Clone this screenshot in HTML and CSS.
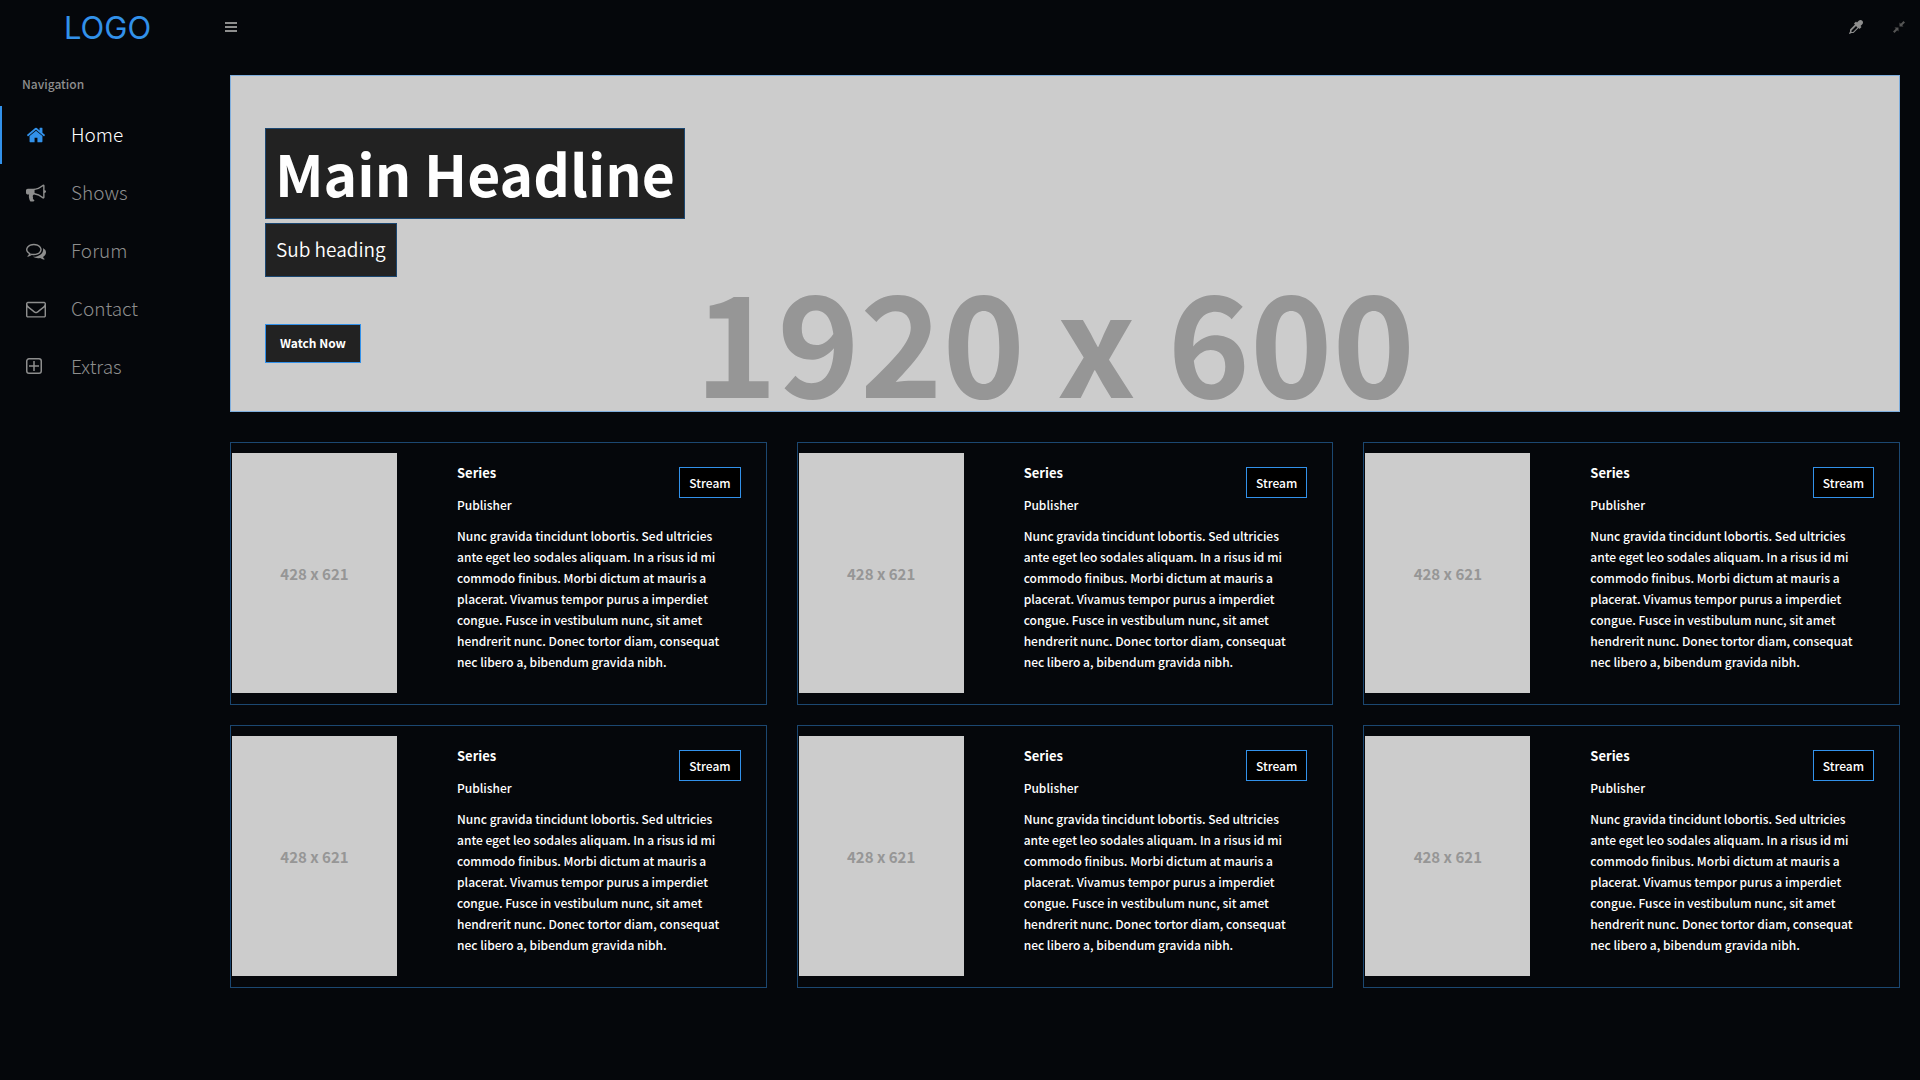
FILE: index.html
```html
<!DOCTYPE html>
<html lang="en">
<head>
<meta charset="utf-8">
<title>Home</title>
<meta name="viewport" content="width=device-width, initial-scale=1">
<link rel="stylesheet" href="styles.css">
</head>
<body>
<div class="app">
  <aside class="sidebar">
    <a class="logo" href="#">LOGO</a>
    <nav class="nav" aria-labelledby="nav-title">
      <h2 class="nav-title" id="nav-title">Navigation</h2>
      <a class="nav-link is-active" href="#">
        <svg class="nav-icon" viewBox="0 0 1792 1792" aria-hidden="true"><path d="M1472 992v480q0 26-19 45t-45 19h-384v-384h-256v384h-384q-26 0-45-19t-19-45v-480q0-1 .5-3t.5-3l575-474 575 474q1 2 1 6zm223-69l-62 74q-8 9-21 11h-3q-13 0-21-7l-692-577-692 577q-12 8-24 7-13-2-21-11l-62-74q-8-10-7-23.5t11-21.5l719-599q32-26 76-26t76 26l244 204v-195q0-14 9-23t23-9h192q14 0 23 9t9 23v408l219 182q10 8 11 21.5t-7 23.5z"/></svg>
        <span>Home</span>
      </a>
      <a class="nav-link" href="#">
        <svg class="nav-icon" viewBox="0 0 1792 1792" aria-hidden="true"><path d="M1664 640q53 0 90.5 37.5t37.5 90.5-37.5 90.5-90.5 37.5v384q0 52-38 90t-90 38q-417-347-812-380-58 19-91 66t-31 100.5 40 92.5q-20 33-23 65.5t6 58 33.5 55 48 50 61.5 50.5q-29 58-111.5 83t-168.5 11.5-132-55.5q-7-23-29.5-87.5t-32-94.5-23-89-15-101 3.5-98.5 22-110.5h-122q-66 0-113-47t-47-113v-192q0-66 47-113t113-47h480q435 0 896-384 52 0 90 38t38 90v384zm-128 604v-954q-394 302-768 343v270q377 42 768 341z"/></svg>
        <span>Shows</span>
      </a>
      <a class="nav-link" href="#">
        <svg class="nav-icon" viewBox="0 0 1792 1792" aria-hidden="true"><path d="M704 384q-153 0-286 52t-211.5 141-78.5 191q0 82 53 158t149 132l97 56-35 84q34-20 62-39l44-31 53 10q78 14 153 14 153 0 286-52t211.500-141 78.500-191-78.500-191-211.500-141-286-52zm0-128q191 0 353.500 68.500t256.500 186.500 94 257-94 257-256.500 186.500-353.500 68.500q-86 0-176-16-124 88-278 128-36 9-86 16h-3q-11 0-20.500-8t-11.500-21q-1-3-1-6.500t.5-6.500 2-6l2.500-5 3.500-5.500 4-5 4.500-5 4-4.500q5-6 23-25t26-29.500 22.500-29 25-38.500 20.500-44q-124-72-195-177t-71-224q0-139 94-257t256.500-186.500 353.500-68.500zm822 1169q10 24 20.500 44t25 38.500 22.500 29 26 29.500 23 25q1 1 4 4.500t4.500 5 4 5 3.500 5.500l2.500 5 2 6 .5 6.500-1 6.500q-3 14-13 22t-22 7q-50-7-86-16-154-40-278-128-90 16-176 16-271 0-472-132 58 4 88 4 161 0 309-45t264-129q125-92 192-212t67-254q0-77-23-152 129 71 204 178t75 230q0 120-71 224.500t-195 176.500z"/></svg>
        <span>Forum</span>
      </a>
      <a class="nav-link" href="#">
        <svg class="nav-icon" viewBox="0 0 1792 1792" aria-hidden="true"><path d="M1664 1504v-768q-32 36-69 66-268 206-426 338-51 43-83 67t-86.500 48.500-102.500 24.500h-2q-48 0-102.500-24.500t-86.500-48.500-83-67q-158-132-426-338-37-30-69-66v768q0 13 9.500 22.500t22.500 9.500h1472q13 0 22.500-9.500t9.500-22.500zm0-1051v-24.500l-.5-13-3-12.500-5.500-9-9-7.500-14-2.500h-1472q-13 0-22.500 9.500t-9.500 22.500q0 168 147 284 193 152 401 317 6 5 35 29.500t46 37.500 44.500 31.500 50.500 27.500 43 9h2q20 0 43-9t50.500-27.500 44.500-31.500 46-37.500 35-29.500q208-165 401-317 54-43 100.500-115.500t46.500-131.500zm128-37v1088q0 66-47 113t-113 47h-1472q-66 0-113-47t-47-113v-1088q0-66 47-113t113-47h1472q66 0 113 47t47 113z"/></svg>
        <span>Contact</span>
      </a>
      <a class="nav-link" href="#">
        <svg class="nav-icon" viewBox="0 0 20 20" aria-hidden="true"><path fill="none" stroke="currentColor" stroke-width="1.500" d="M3 1.750h10A2.250 2.250 0 0 1 15.250 4v10A2.250 2.250 0 0 1 13 16.250H3A2.250 2.250 0 0 1 .75 14V4A2.250 2.250 0 0 1 3 1.750zM8 4v10M3 9h10"/></svg>
        <span>Extras</span>
      </a>
    </nav>
  </aside>

  <div class="page">
    <header class="topbar">
      <button class="icon-button" type="button" aria-label="Toggle menu">
        <svg width="12" height="10" viewBox="0 0 12 10" aria-hidden="true"><path d="M0 0h12v2H0zM0 4h12v2H0zM0 8h12v2H0z"/></svg>
      </button>
      <div class="tools">
        <button class="icon-button" type="button" aria-label="Pick theme colour">
          <svg width="14" height="14" viewBox="0 0 1792 1792" aria-hidden="true"><path d="M1698 94q94 94 94 226.500t-94 225.500l-225 223 104 104q10 10 10 23t-10 23l-210 210q-10 10-23 10t-23-10l-105-105-603 603q-37 37-90 37h-203l-256 128-64-64 128-256v-203q0-53 37-90l603-603-105-105q-10-10-10-23t10-23l210-210q10-10 23-10t23 10l104 104 223-225q93-94 225.500-94t226.500 94zm-1186 1442l576-576-192-192-576 576v192h192z"/></svg>
        </button>
        <button class="icon-button is-dim" type="button" aria-label="Exit full screen">
          <svg width="12" height="12" viewBox="0 0 12 12" aria-hidden="true"><path d="M6.500 1.500 7.800 2.800 10.500 0 12 1.500 9.200 4.200 10.500 5.500h-4zM1.500 6.500h4v4L4.200 9.200 1.500 12 0 10.500 2.800 7.800z"/></svg>
        </button>
      </div>
    </header>

    <main class="content">
      <section class="hero">
        <div class="hero-image" aria-hidden="true">1920 x 600</div>
        <h1 class="hero-title">Main Headline</h1>
        <p class="hero-subtitle">Sub heading</p>
        <button class="hero-button" type="button">Watch Now</button>
      </section>

      <section class="cards">
        <article class="card">
          <div class="poster">428 x 621</div>
          <div class="card-body">
            <div class="card-head"><div><h3 class="card-title">Series</h3><p>Publisher</p></div><button class="stream" type="button">Stream</button></div>
            <p class="card-text">Nunc gravida tincidunt lobortis. Sed ultricies ante eget leo sodales aliquam. In a risus id mi commodo finibus. Morbi dictum at mauris a placerat. Vivamus tempor purus a imperdiet congue. Fusce in vestibulum nunc, sit amet hendrerit nunc. Donec tortor diam, consequat nec libero a, bibendum gravida nibh.</p>
          </div>
        </article>
        <article class="card">
          <div class="poster">428 x 621</div>
          <div class="card-body">
            <div class="card-head"><div><h3 class="card-title">Series</h3><p>Publisher</p></div><button class="stream" type="button">Stream</button></div>
            <p class="card-text">Nunc gravida tincidunt lobortis. Sed ultricies ante eget leo sodales aliquam. In a risus id mi commodo finibus. Morbi dictum at mauris a placerat. Vivamus tempor purus a imperdiet congue. Fusce in vestibulum nunc, sit amet hendrerit nunc. Donec tortor diam, consequat nec libero a, bibendum gravida nibh.</p>
          </div>
        </article>
        <article class="card">
          <div class="poster">428 x 621</div>
          <div class="card-body">
            <div class="card-head"><div><h3 class="card-title">Series</h3><p>Publisher</p></div><button class="stream" type="button">Stream</button></div>
            <p class="card-text">Nunc gravida tincidunt lobortis. Sed ultricies ante eget leo sodales aliquam. In a risus id mi commodo finibus. Morbi dictum at mauris a placerat. Vivamus tempor purus a imperdiet congue. Fusce in vestibulum nunc, sit amet hendrerit nunc. Donec tortor diam, consequat nec libero a, bibendum gravida nibh.</p>
          </div>
        </article>
        <article class="card">
          <div class="poster">428 x 621</div>
          <div class="card-body">
            <div class="card-head"><div><h3 class="card-title">Series</h3><p>Publisher</p></div><button class="stream" type="button">Stream</button></div>
            <p class="card-text">Nunc gravida tincidunt lobortis. Sed ultricies ante eget leo sodales aliquam. In a risus id mi commodo finibus. Morbi dictum at mauris a placerat. Vivamus tempor purus a imperdiet congue. Fusce in vestibulum nunc, sit amet hendrerit nunc. Donec tortor diam, consequat nec libero a, bibendum gravida nibh.</p>
          </div>
        </article>
        <article class="card">
          <div class="poster">428 x 621</div>
          <div class="card-body">
            <div class="card-head"><div><h3 class="card-title">Series</h3><p>Publisher</p></div><button class="stream" type="button">Stream</button></div>
            <p class="card-text">Nunc gravida tincidunt lobortis. Sed ultricies ante eget leo sodales aliquam. In a risus id mi commodo finibus. Morbi dictum at mauris a placerat. Vivamus tempor purus a imperdiet congue. Fusce in vestibulum nunc, sit amet hendrerit nunc. Donec tortor diam, consequat nec libero a, bibendum gravida nibh.</p>
          </div>
        </article>
        <article class="card">
          <div class="poster">428 x 621</div>
          <div class="card-body">
            <div class="card-head"><div><h3 class="card-title">Series</h3><p>Publisher</p></div><button class="stream" type="button">Stream</button></div>
            <p class="card-text">Nunc gravida tincidunt lobortis. Sed ultricies ante eget leo sodales aliquam. In a risus id mi commodo finibus. Morbi dictum at mauris a placerat. Vivamus tempor purus a imperdiet congue. Fusce in vestibulum nunc, sit amet hendrerit nunc. Donec tortor diam, consequat nec libero a, bibendum gravida nibh.</p>
          </div>
        </article>
      </section>
    </main>
  </div>
</div>
</body>
</html>
```
FILE: styles.css
```css
:root {
  --bg: #05070b;
  --accent: #3291ea;
  --accent-line: #1b4771;
  --muted: #8e8e8e;
  --panel: #222;
  --placeholder: #ccc;
  --placeholder-text: #969696;
}

* {
  box-sizing: border-box;
}

body {
  margin: 0;
  background: var(--bg);
  color: #fff;
  font: 500 12px/21px "Source Sans Pro", "Noto Sans CJK SC", sans-serif;
}

h1, h2, h3, p {
  margin: 0;
}

button {
  font: inherit;
  color: inherit;
  cursor: pointer;
}

a {
  text-decoration: none;
}

.app {
  display: grid;
  grid-template-columns: 215px minmax(0, 1fr);
  min-height: 100vh;
}

/* Sidebar */
.logo {
  display: block;
  height: 54px;
  text-align: center;
  color: var(--accent);
  font: 400 31px/56px Inter, sans-serif;
}

.nav-title {
  padding: 19px 22px 12px;
  color: var(--muted);
  font-size: 12px;
  font-weight: 500;
}

.nav-link {
  display: flex;
  align-items: center;
  gap: 25px;
  height: 58px;
  padding-left: 24px;
  border-left: 2px solid transparent;
  color: var(--muted);
  font-size: 19px;
  font-weight: 300;
}

.nav-link span {
  padding-bottom: 4px;
}

.nav-link.is-active {
  border-color: var(--accent);
  color: #fff;
}

.nav-icon {
  width: 20px;
  height: 20px;
  fill: currentColor;
}

.is-active .nav-icon {
  color: var(--accent);
}

/* Top bar */
.topbar {
  display: flex;
  justify-content: space-between;
  align-items: center;
  height: 54px;
  padding: 0 15px 0 10px;
}

.tools {
  display: flex;
  gap: 30px;
}

.icon-button {
  display: flex;
  align-items: center;
  padding: 0;
  border: 0;
  background: none;
  color: var(--muted);
}

.icon-button svg {
  fill: currentColor;
}

.icon-button.is-dim {
  color: #555;
}

/* Hero */
.content {
  padding: 21px 20px 20px 15px;
}

.hero {
  position: relative;
  display: flex;
  flex-direction: column;
  align-items: flex-start;
  padding: 52px 34px 48px;
  border: 1px solid #7faedd;
  background: var(--placeholder);
}

.hero-image {
  position: absolute;
  inset: 0;
  display: flex;
  justify-content: center;
  align-items: flex-end;
  padding: 0 20px 4px 0;
  color: var(--placeholder-text);
  font-size: 140px;
  font-weight: 700;
  line-height: 1;
}

.hero-title,
.hero-subtitle,
.hero-button {
  position: relative;
  background: var(--panel);
}

.hero-title {
  padding: 0 9px 2px;
  border: 1px solid var(--accent-line);
  font-size: 57px;
  font-weight: 700;
  line-height: 87px;
}

.hero-subtitle {
  margin: 4px 0 47px;
  padding: 0 10px 2px;
  border: 1px solid var(--accent-line);
  font-size: 19px;
  font-weight: 350;
  line-height: 50px;
}

.hero-button {
  padding: 7px 14px 9px;
  border: 1px solid var(--accent);
  font-weight: 700;
}

/* Cards */
.cards {
  display: grid;
  grid-template-columns: repeat(3, minmax(0, 1fr));
  gap: 20px 30px;
  margin-top: 30px;
}

.card {
  display: flex;
  gap: 60px;
  padding: 10px 25px 11px 1px;
  border: 1px solid var(--accent-line);
}

.poster {
  display: grid;
  place-items: center;
  flex: none;
  width: 165px;
  height: 240px;
  background: var(--placeholder);
  color: var(--placeholder-text);
  font-size: 15px;
  font-weight: 700;
}

.card-body {
  flex: 1;
  min-width: 0;
  padding-top: 9px;
}

.card-head {
  display: flex;
  justify-content: space-between;
  align-items: flex-start;
  margin-bottom: 10px;
}

.card-title {
  margin-bottom: 11px;
  font-size: 13px;
  font-weight: 700;
}

.card-text {
  padding-right: 10px;
}

.stream {
  margin-top: 5px;
  padding: 4px 9px;
  border: 1px solid var(--accent);
  background: #000;
}
```
